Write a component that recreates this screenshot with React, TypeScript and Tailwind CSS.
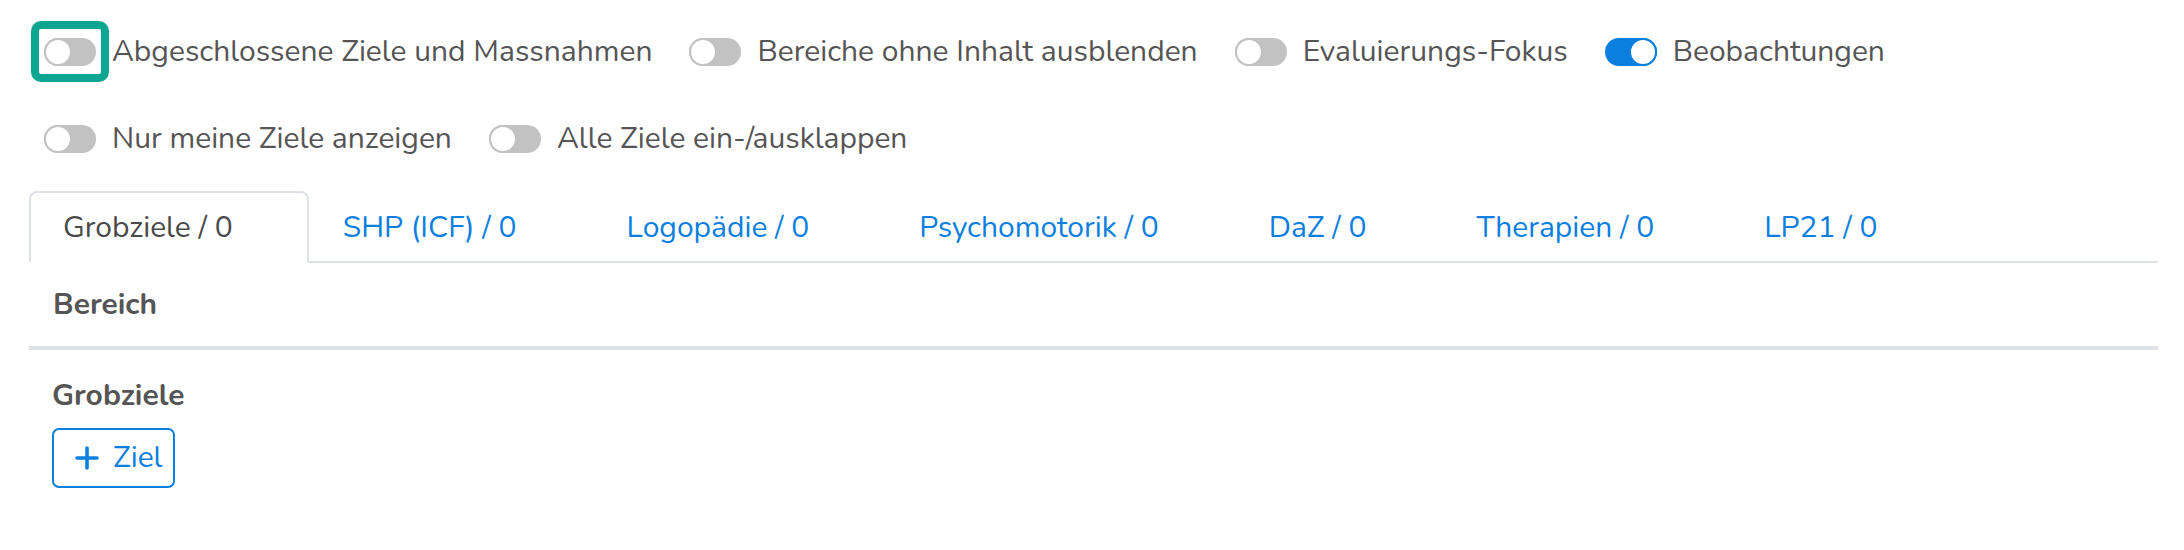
const FONT = { fontFamily: '"Nunito", "Open Sans", sans-serif' };

const Toggle = ({ on }: { on?: boolean }) => (
    <span
        className={`relative inline-block w-[52px] h-[28px] rounded-full shrink-0 ${on ? 'bg-[#0b7fe0]' : 'bg-[#c2c2c2]'}`}
    >
        <span
            className={`absolute top-0 w-[28px] h-[28px] rounded-full bg-white border-2 ${on ? 'right-0 border-[#0b7fe0]' : 'left-0 border-[#c2c2c2]'}`}
        ></span>
    </span>
);

const Switch = ({ label, on, focused }: { label: string; on?: boolean; focused?: boolean }) => (
    <label className="flex items-center mr-[37px]">
        <span className="relative flex">
            <Toggle on={on} />
            {focused && (
                <span className="absolute -left-[13px] -right-[13px] -top-[17px] -bottom-[16px] border-[8px] border-[#0ba592] rounded-[10px]"></span>
            )}
        </span>
        <span className="ml-[16px] text-[30px] leading-[28px] text-[#555555] whitespace-nowrap">{label}</span>
    </label>
);

const tabs = [
    'Grobziele / 0',
    'SHP (ICF) / 0',
    'Logopädie / 0',
    'Psychomotorik / 0',
    'DaZ / 0',
    'Therapien / 0',
    'LP21 / 0',
];

export default function App() {
    return (
        <div className="w-[2184px] h-[550px] bg-white overflow-hidden pt-[38px]" style={FONT}>
            {/* Schalter */}
            <div className="pl-[44px]">
                <div className="flex items-center h-[28px]">
                    <Switch label="Abgeschlossene Ziele und Massnahmen" focused />
                    <Switch label="Bereiche ohne Inhalt ausblenden" />
                    <Switch label="Evaluierungs-Fokus" />
                    <Switch label="Beobachtungen" on />
                </div>
                <div className="flex items-center h-[28px] mt-[59px]">
                    <Switch label="Nur meine Ziele anzeigen" />
                    <Switch label="Alle Ziele ein-/ausklappen" />
                </div>
            </div>

            {/* Tabs */}
            <div className="ml-[29px] w-[2129px] mt-[38px]">
                <div className="flex border-b-2 border-[#dee2e6]">
                    {tabs.map((t, i) => (
                        <div
                            key={t}
                            className={`shrink-0 h-[72px] -mb-[2px] flex items-center pl-[32px] pr-[74px] border-2 rounded-t-[8px] text-[30px] whitespace-nowrap ${
                                i === 0
                                    ? 'border-[#dee2e6] border-b-white bg-white text-[#4a4a4a]'
                                    : 'border-transparent text-[#0b7fe0]'
                            }`}
                        >
                            {t}
                        </div>
                    ))}
                </div>

                <div className="h-[87px] flex items-center pl-[24px] border-b-4 border-[#dee2e6]">
                    <span className="text-[30px] font-bold text-[#555555]">Bereich</span>
                </div>

                <div className="pl-[23px] pt-[28px]">
                    <div className="text-[30px] font-bold text-[#555555] leading-[36px]">Grobziele</div>
                    <button className="mt-[14px] h-[60px] w-[123px] flex items-center pl-[21px] border-2 border-[#0b7fe0] rounded-[7px] text-[#0b7fe0] text-[30px]">
                        <svg viewBox="0 0 24 24" className="w-[24px] h-[24px]" fill="none" stroke="currentColor" strokeWidth={3.6} strokeLinecap="round">
                            <path d="M12 2v20M2 12h20" />
                        </svg>
                        <span className="ml-[14px] leading-[30px]">Ziel</span>
                    </button>
                </div>
            </div>
        </div>
    );
}
